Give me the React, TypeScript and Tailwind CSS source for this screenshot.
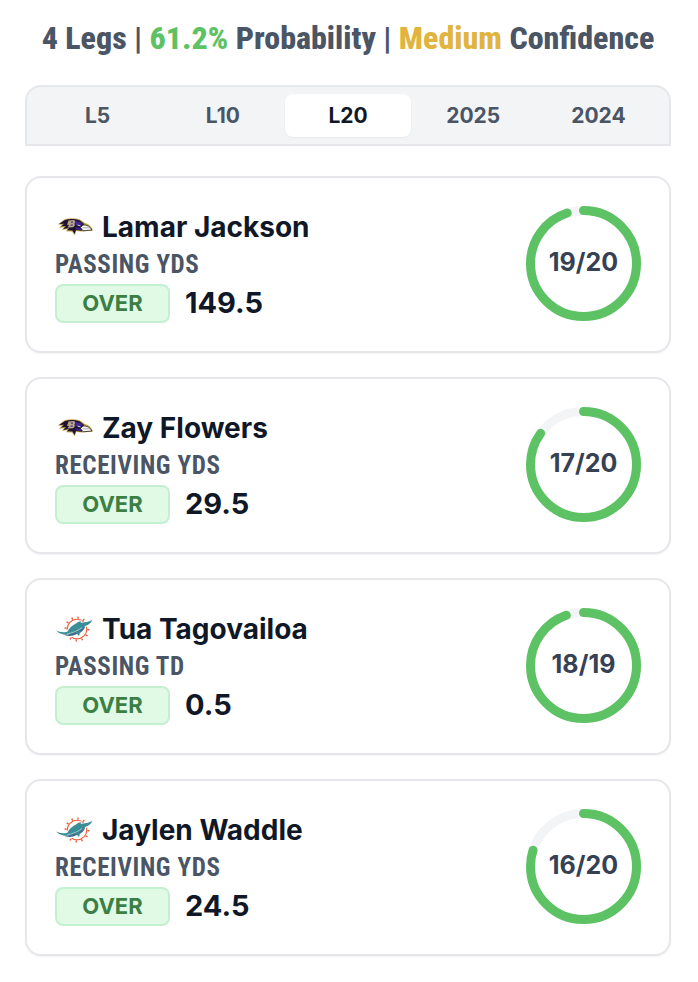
import React, { useState } from 'react';

type Team = 'BAL' | 'MIA';

interface Leg {
  player: string;
  team: Team;
  market: string;
  side: string;
  line: string;
  hits: number;
  games: number;
}

const RANGES = ['L5', 'L10', 'L20', '2025', '2024'];

const LEGS: Leg[] = [
  { player: 'Lamar Jackson', team: 'BAL', market: 'PASSING YDS', side: 'OVER', line: '149.5', hits: 19, games: 20 },
  { player: 'Zay Flowers', team: 'BAL', market: 'RECEIVING YDS', side: 'OVER', line: '29.5', hits: 17, games: 20 },
  { player: 'Tua Tagovailoa', team: 'MIA', market: 'PASSING TD', side: 'OVER', line: '0.5', hits: 18, games: 19 },
  { player: 'Jaylen Waddle', team: 'MIA', market: 'RECEIVING YDS', side: 'OVER', line: '24.5', hits: 16, games: 20 },
];

// --- Logos ---

const RavensLogo = () => (
  <svg viewBox="0 0 38 28" className="w-[38px] h-7 shrink-0" aria-hidden="true">
    <path d="M3 11.5 L9 6.5 Q17 4 25 6.5 L30 10 Q36 11.5 38 17.5 L27 18.5 L21 18 L20 22.5 L17 18.5 L11 18.2 L12.5 16 L7 17 L9.5 14 L4 15 L7 11.8 Z" fill="#c9a348" />
    <path d="M4 11 L10 7 Q17 5 24.5 7.2 L29 10.8 L27 17.8 L21 17 L19.5 21 L17.5 17.4 L12 17.2 L14 15 L8 15.9 L11 13 L6 13.4 L9 10.8 Z" fill="#1d1433" />
    <path d="M20 8 Q25 8 28 11 L25 13 L20 12 Z M20 14.5 L26 15 L27 17 L21 16.5 Z" fill="#3d2490" />
    <path d="M28 12 Q34 11.5 37 17 L28 17.8 L25.5 14.5 Z" fill="#f8f8f8" stroke="#242424" strokeWidth="0.8" />
    <path d="M27.5 14.8 L34.5 14.8" stroke="#777" strokeWidth="0.6" />
    <path d="M13.5 7.5 L19 7 Q21 8.2 19.5 10.3 Q20.5 12.8 18 14.3 L12.5 14.6 L14 12 L12 11.8 Z" fill="#b7a58b" />
    <path d="M16 9.2 L18 9.1 M15.5 12.2 L17.8 12" stroke="#3b2860" strokeWidth="1" />
    <path d="M22.5 12 L25.5 13" stroke="#e7dff5" strokeWidth="0.9" />
  </svg>
);

const DolphinsLogo = () => (
  <svg viewBox="0 0 38 28" className="w-[38px] h-7 shrink-0" aria-hidden="true">
    <circle cx="22" cy="14" r="9.8" fill="none" stroke="#ee5a36" strokeWidth="1.1" />
    <circle cx="22" cy="14" r="11.4" fill="none" stroke="#ee5a36" strokeWidth="2.2" strokeDasharray="1.4 4.57" />
    <path d="M0.5 14.5 Q6 18 11.5 16 Q15 10 20 8 Q23 5 27 5.5 L26.5 7 Q32 7 38 4 Q35 9 31.5 11.5 Q29 17 25 19 L25 22 L21 20.5 Q15 24 9.5 21.5 Q4 21 0.5 14.5 Z" fill="#fff" />
    <path d="M1 15.5 Q6 18.3 12.3 16.8 Q15.5 11 21 8.6 Q23.3 6.3 26.2 6.3 L25.6 7.7 Q32 7.8 37.5 5 Q35 9.5 30.5 10.8 Q28 15.5 20 17.8 Q14 20 8.5 19.6 Q4 19 1 15.5 Z" fill="#3b8d97" />
    <path d="M9.5 20 Q14 19.8 19 17.6 Q27 15 30.3 11.2 Q29 16.5 22 19 Q15.5 22.5 9.5 20 Z" fill="#3d6c8c" />
    <path d="M12 19 Q22 16.8 27 12.5" fill="none" stroke="#fff" strokeWidth="0.5" />
    <path d="M20.5 17.5 L24 21 L25.5 16 Z" fill="#3b8d97" />
  </svg>
);

// --- Components ---

const HitRing = ({ hits, games }: { hits: number; games: number }) => (
  <div className="grid place-items-center shrink-0">
    <svg viewBox="0 0 115 115" className="size-[115px] -rotate-90 col-start-1 row-start-1" aria-hidden="true">
      <circle cx="57.5" cy="57.5" r="53" fill="none" stroke="#f3f4f6" strokeWidth="9" />
      <circle
        cx="57.5"
        cy="57.5"
        r="53"
        fill="none"
        stroke="#5dc264"
        strokeWidth="9"
        strokeLinecap="round"
        pathLength={games}
        strokeDasharray={`${hits} ${games}`}
      />
    </svg>
    <span className="col-start-1 row-start-1 pb-1 text-[25px] leading-8 font-bold text-gray-700">{hits}/{games}</span>
  </div>
);

const LegCard = ({ leg }: { leg: Leg }) => (
  <article className="flex items-start justify-between rounded-2xl border-2 border-gray-200 bg-white p-7 shadow-xs">
    <div>
      <div className="flex items-center gap-[9px] h-[41px]">
        {leg.team === 'BAL' ? <RavensLogo /> : <DolphinsLogo />}
        <h2 className="text-[28px] leading-10 font-bold text-gray-900">{leg.player}</h2>
      </div>
      <p className="font-['Roboto_Condensed','Roboto',sans-serif] text-[25px] leading-9 font-bold tracking-wide text-gray-600">{leg.market}</p>
      <div className="flex items-center gap-[15px]">
        <span className="w-[115px] rounded-lg border-2 border-[#c5f0cf] bg-[#e0fae6] text-center text-[22px] leading-[35px] font-bold text-[#3c7f45]">{leg.side}</span>
        <span className="text-[29px] leading-10 font-bold text-gray-900">{leg.line}</span>
      </div>
    </div>
    <HitRing hits={leg.hits} games={leg.games} />
  </article>
);

const App = () => {
  const [range, setRange] = useState('L20');

  return (
    <div className="min-h-screen bg-white pl-[25px] pr-[27px] pt-4 pb-6 font-['Inter',sans-serif]">
      <h1 className="text-center whitespace-nowrap font-['Roboto_Condensed','Roboto',sans-serif] text-[32px] leading-11 font-extrabold text-gray-600">
        4 Legs | <span className="text-[#5dc264]">61.2%</span> Probability | <span className="text-[#e0b43e]">Medium</span> Confidence
      </h1>

      <div className="mt-[25px] flex rounded-t-2xl border-2 border-gray-200 bg-gray-100 px-2 py-[7px]">
        {RANGES.map((r) => (
          <button
            key={r}
            type="button"
            onClick={() => setRange(r)}
            className={`flex-1 rounded-lg text-[21px] leading-[43px] font-bold ${r === range ? 'bg-white text-gray-900 shadow-xs' : 'text-gray-600'}`}
          >
            {r}
          </button>
        ))}
      </div>

      <main className="mt-[30px] flex flex-col gap-6">
        {LEGS.map((leg) => (
          <LegCard key={leg.player} leg={leg} />
        ))}
      </main>
    </div>
  );
};

export default App;
